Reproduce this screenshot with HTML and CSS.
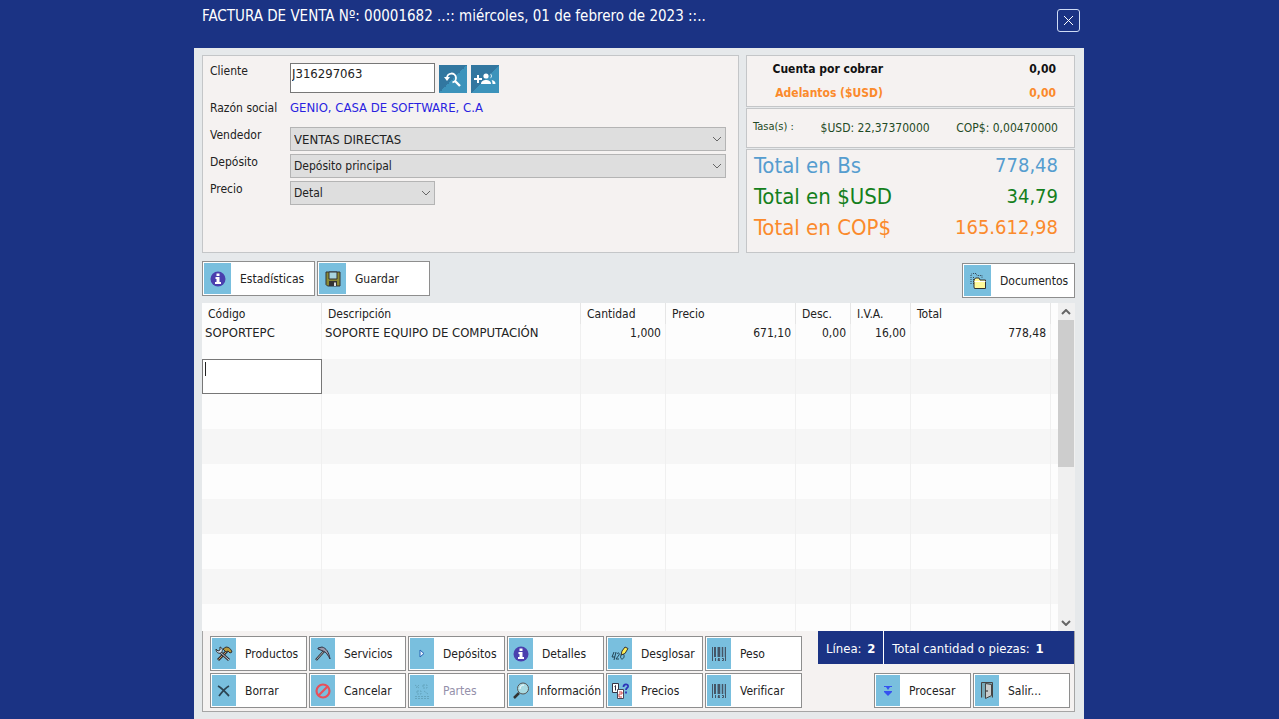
FILE: index.html
```html
<!DOCTYPE html>
<html lang="es">
<head>
    <meta charset="UTF-8">
    <meta name="viewport" content="width=device-width, initial-scale=1.0">
    <title>Factura de venta</title>
    <link rel="stylesheet" href="styles.css">
</head>
<body>
    <div class="window">
        <header class="titlebar">
            <h1>FACTURA DE VENTA Nº: 00001682 ..:: miércoles, 01 de febrero de 2023 ::..</h1>
            <button class="close" type="button" aria-label="Cerrar">
                <svg width="11" height="11" viewBox="0 0 11 11"><path d="M1 1l9 9M10 1l-9 9" stroke="#fff" fill="none"/></svg>
            </button>
        </header>

        <main class="content">
            <div class="panels">
                <form class="panel form">
                    <label for="cliente">Cliente</label>
                    <div class="client">
                        <input id="cliente" type="text" value="J316297063">
                        <button class="square" type="button" aria-label="Buscar cliente">
                            <svg width="18" height="18" viewBox="0 0 18 18" fill="none" stroke="#fff"><path d="M3 8a4.5 4.5 0 1 1 5.500 4.400" stroke-width="1.800"/><path d="M11 11l5 5" stroke-width="2.400"/><path d="M0 7h6l-3 4z" fill="#fff" stroke="none"/></svg>
                        </button>
                        <button class="square" type="button" aria-label="Agregar cliente">
                            <svg width="22" height="16" viewBox="0 0 22 16" fill="#fff"><path d="M0 7h3V4h2v3h3v2H5v3H3V9H0z"/><circle cx="12" cy="5" r="2.600"/><path d="M7 13c0-3 2.500-4 5-4s5 1 5 4z"/><path d="M16 2.500a2.600 2.600 0 0 1 0 5 4 4 0 0 0 0-5zM17.500 9c2.500.3 4 1.500 4 4h-3c0-1.800-.3-3-1-4z"/></svg>
                        </button>
                    </div>
                    <span>Razón social</span>
                    <output class="company">GENIO, CASA DE SOFTWARE, C.A</output>
                    <label for="vendedor">Vendedor</label>
                    <div class="select">
                        <select id="vendedor"><option>VENTAS DIRECTAS</option></select>
                        <svg width="10" height="6" viewBox="0 0 10 6"><path d="M1 1l4 4 4-4"/></svg>
                    </div>
                    <label for="deposito">Depósito</label>
                    <div class="select">
                        <select id="deposito"><option>Depósito principal</option></select>
                        <svg width="10" height="6" viewBox="0 0 10 6"><path d="M1 1l4 4 4-4"/></svg>
                    </div>
                    <label for="precio">Precio</label>
                    <div class="select short">
                        <select id="precio"><option>Detal</option></select>
                        <svg width="10" height="6" viewBox="0 0 10 6"><path d="M1 1l4 4 4-4"/></svg>
                    </div>
                </form>

                <section class="summary">
                    <div class="panel balance">
                        <p><span>Cuenta por cobrar</span><span>0,00</span></p>
                        <p class="orange"><span>Adelantos ($USD)</span><span>0,00</span></p>
                    </div>
                    <div class="panel rates">
                        <small>Tasa(s) :</small>
                        <span>$USD: 22,37370000</span>
                        <span>COP$: 0,00470000</span>
                    </div>
                    <div class="panel totals">
                        <p class="blue"><span>Total en Bs</span><span class="amount">778,48</span></p>
                        <p class="green"><span>Total en $USD</span><span class="amount">34,79</span></p>
                        <p class="orange"><span>Total en COP$</span><span class="amount">165.612,98</span></p>
                    </div>
                </section>
            </div>

            <div class="toolbar">
                <button class="btn wide" type="button">
                    <span class="icon"><svg width="16" height="16" viewBox="0 0 16 16"><circle cx="8" cy="8" r="7.500" fill="#4a3fae"/><path d="M6.500 2.500h3v2.500h-3zM5.500 6h4v5h1.500v2h-6v-2h1.500V8h-1z" fill="#fff"/></svg></span>
                    Estadísticas
                </button>
                <button class="btn wide" type="button">
                    <span class="icon"><svg width="16" height="16" viewBox="0 0 16 16"><path d="M1 1h14v14H2.500L1 13.500z" fill="#8a8a35" stroke="#333"/><path d="M4 1h8v7H4z" fill="#a8d4dd" stroke="#333"/><path d="M4 10h8v5H4z" fill="#333"/><path d="M9 11.500h2V15H9z" fill="#ddd"/></svg></span>
                    Guardar
                </button>
                <button class="btn wide last" type="button">
                    <span class="icon"><svg width="18" height="18" viewBox="0 0 18 18"><path d="M2 12V2.500l1-1h4l1 2h5V6M4.500 12V4.500" fill="none" stroke="#345" stroke-dasharray="1 1"/><path d="M5 15V8l1.500-2H10l1 2h5.500v8.500h-11z" fill="#fffa9a" stroke="#333"/><path d="M5.500 9.500h11" stroke="#fff"/></svg></span>
                    Documentos
                </button>
            </div>

            <div class="grid">
                <div class="rows">
                    <table>
                        <colgroup><col class="c-code"><col><col class="c-qty"><col class="c-price"><col class="c-desc"><col class="c-iva"><col class="c-total"><col class="c-end"></colgroup>
                        <thead>
                            <tr><th>Código</th><th>Descripción</th><th>Cantidad</th><th>Precio</th><th>Desc.</th><th>I.V.A.</th><th>Total</th><th></th></tr>
                        </thead>
                        <tbody>
                            <tr><td class="name">SOPORTEPC</td><td class="name">SOPORTE EQUIPO DE COMPUTACIÓN</td><td class="num">1,000</td><td class="num">671,10</td><td class="num">0,00</td><td class="num">16,00</td><td class="num">778,48</td><td></td></tr>
                            <tr><td class="edit"><input type="text" aria-label="Código"></td><td></td><td></td><td></td><td></td><td></td><td></td><td></td></tr>
                            <tr><td></td><td></td><td></td><td></td><td></td><td></td><td></td><td></td></tr>
                            <tr><td></td><td></td><td></td><td></td><td></td><td></td><td></td><td></td></tr>
                            <tr><td></td><td></td><td></td><td></td><td></td><td></td><td></td><td></td></tr>
                            <tr><td></td><td></td><td></td><td></td><td></td><td></td><td></td><td></td></tr>
                            <tr><td></td><td></td><td></td><td></td><td></td><td></td><td></td><td></td></tr>
                            <tr><td></td><td></td><td></td><td></td><td></td><td></td><td></td><td></td></tr>
                            <tr><td></td><td></td><td></td><td></td><td></td><td></td><td></td><td></td></tr>
                        </tbody>
                    </table>
                </div>
                <div class="scrollbar">
                    <button type="button" aria-label="Subir"><svg width="10" height="6" viewBox="0 0 10 6"><path d="M1 5l4-4 4 4"/></svg></button>
                    <div class="track"><div class="thumb"></div></div>
                    <button type="button" aria-label="Bajar"><svg width="10" height="6" viewBox="0 0 10 6"><path d="M1 1l4 4 4-4"/></svg></button>
                </div>
            </div>

            <footer class="footer">
                <div class="actions">
                    <button class="btn" type="button">
                        <span class="icon"><svg width="18" height="16" viewBox="0 0 18 16"><path d="M3 14L13 4" stroke="#333" stroke-width="3"/><path d="M3.500 13.500L13 4" stroke="#c96" stroke-width="1"/><path d="M8 3l3-2c3 0 5 2 6 5l-2 1-2-2-2 1z" fill="#b89a3c" stroke="#333"/><path d="M5 6l9 8" stroke="#333" stroke-width="3"/><path d="M5 6l9 8" stroke="#ccd" stroke-width="1"/><path d="M1 3l2 2 2-1V1c3 1 3 4 1 6-3 1-5-1-5-4z" fill="#cde" stroke="#333"/></svg></span>
                        Productos
                    </button>
                    <button class="btn" type="button">
                        <span class="icon"><svg width="18" height="16" viewBox="0 0 18 16"><path d="M2 14L11 4" stroke="#333" stroke-width="2.500"/><path d="M2.500 13.500L10 5" stroke="#aab"/><path d="M4 2l4-1c4 1 7 5 8 12-2-4-4-7-7-8L4 3z" fill="#99a" stroke="#334"/></svg></span>
                        Servicios
                    </button>
                    <button class="btn" type="button">
                        <span class="icon"><svg width="6" height="9" viewBox="0 0 6 9"><path d="M1 1l4 3.500L1 8z" fill="#e8f2ff" stroke="#2864b4"/></svg></span>
                        Depósitos
                    </button>
                    <button class="btn" type="button">
                        <span class="icon"><svg width="16" height="16" viewBox="0 0 16 16"><circle cx="8" cy="8" r="7.500" fill="#4a3fae"/><path d="M6.500 2.500h3v2.500h-3zM5.500 6h4v5h1.500v2h-6v-2h1.500V8h-1z" fill="#fff"/></svg></span>
                        Detalles
                    </button>
                    <button class="btn" type="button">
                        <span class="icon"><svg width="18" height="16" viewBox="0 0 18 16"><path d="M3 6l-2 5h3M5 6l-2 8M6 8c1-2 3-1 2 1l-3 4h3M12 8c-3 0-3 5-1 5s3-4 1-5z" fill="none" stroke="#245"/><path d="M10 9l1-4 3-4 3 1.500-3 5z" fill="#ffee55" stroke="#333"/></svg></span>
                        Desglosar
                    </button>
                    <button class="btn" type="button">
                        <span class="icon"><svg width="16" height="14" viewBox="0 0 16 14" stroke="#456" fill="none"><path d="M1.500 0v14M14.500 0v14M11.500 0v10"/><path d="M4 0v10M8 0v10" stroke-width="2"/><path d="M6.500 0v10M10 0v10M13 0v10" stroke-width=".5"/><path d="M4.500 11v3M7 11.500h1.500v1H7v1h2M11 11.500h1.500v2H11"/></svg></span>
                        Peso
                    </button>
                    <button class="btn" type="button">
                        <span class="icon"><svg width="14" height="12" viewBox="0 0 14 12"><path d="M1 1c4 2 7 6 11 10M12 1C8 3 5 7 2 11" fill="none" stroke="#2c4452" stroke-width="1.800"/></svg></span>
                        Borrar
                    </button>
                    <button class="btn" type="button">
                        <span class="icon"><svg width="16" height="16" viewBox="0 0 16 16"><path d="M3 13L13 3" stroke="#e8505b" stroke-width="2.200"/><circle cx="8" cy="8" r="6.500" fill="none" stroke="#e8505b" stroke-width="2.200"/></svg></span>
                        Cancelar
                    </button>
                    <button class="btn" type="button" disabled>
                        <span class="icon"><svg width="16" height="16" viewBox="0 0 16 16" fill="none" stroke="#65a5be"><path d="M1 2l4 3M5 2L2 5M9 2h4v3H9zM3 8h4v3H3zM10 8l4 3M1 13.500h14M1 15.500h14" stroke-dasharray="2 1"/></svg></span>
                        Partes
                    </button>
                    <button class="btn tight" type="button">
                        <span class="icon"><svg width="17" height="17" viewBox="0 0 17 17"><path d="M1 16l5-5" stroke="#333" stroke-width="2.500"/><circle cx="10" cy="6.500" r="5.500" fill="#a9dbe3" stroke="#555"/><path d="M7 7c0-3 2-4 4-4" stroke="#fff" fill="none"/></svg></span>
                        Información
                    </button>
                    <button class="btn" type="button">
                        <span class="icon"><svg width="17" height="16" viewBox="0 0 17 16"><path d="M.5.5h6v9h-6z" fill="#fff" stroke="#334"/><path d="M2.500 3.500l1-1v5" fill="none" stroke="#334"/><path d="M5.500 6.500h6v9h-6z" fill="#fff" stroke="#445"/><path d="M7 9h3v2H7v3h3" fill="none" stroke="#c44"/><path d="M11.500 4c0-3.500 5-3.500 4.500-.5-.3 1.500-2 1.500-2 3.500M14 8.500v2" fill="none" stroke="#2d35b8" stroke-width="1.800"/></svg></span>
                        Precios
                    </button>
                    <button class="btn" type="button">
                        <span class="icon"><svg width="16" height="14" viewBox="0 0 16 14" stroke="#456" fill="none"><path d="M1.500 0v14M14.500 0v14M11.500 0v10"/><path d="M4 0v10M8 0v10" stroke-width="2"/><path d="M6.500 0v10M10 0v10M13 0v10" stroke-width=".5"/><path d="M4.500 11v3M7 11.500h1.500v1H7v1h2M11 11.500h1.500v2H11"/></svg></span>
                        Verificar
                    </button>
                </div>
                <div class="finish">
                    <div class="status">
                        <span>Línea: <b>2</b></span>
                        <span>Total cantidad o piezas: <b>1</b></span>
                    </div>
                    <div class="end">
                        <button class="btn" type="button">
                            <span class="icon"><svg width="8" height="10" viewBox="0 0 8 10" fill="#3552f0"><path d="M0 0h8v1H6L4 4 2 1H0zM0 5h8v1L4 10 0 6z"/></svg></span>
                            Procesar
                        </button>
                        <button class="btn" type="button">
                            <span class="icon"><svg width="12" height="17" viewBox="0 0 12 17"><path d="M.5 15.500V.5h11v15" fill="#78a9b8" stroke="#444"/><path d="M4.500 1.500l6 1v11l-6 3z" fill="#c9cccc" stroke="#444"/><path d="M6 8v2" stroke="#222"/></svg></span>
                            Salir...
                        </button>
                    </div>
                </div>
            </footer>
        </main>
    </div>
</body>
</html>
```

FILE: styles.css
```css
* {
    box-sizing: border-box;
}
body {
    margin: 0;
    padding: 0 195px 0 194px;
    background-color: #1b3384;
    color: #222;
    font-family: 'DejaVu Sans Condensed', 'Noto Sans', sans-serif;
    font-size: 12px;
}
button, input, select {
    font: inherit;
    color: inherit;
    margin: 0;
}
p {
    margin: 0;
}
.window {
    display: flex;
    flex-direction: column;
    height: 100vh;
    min-height: 600px;
    min-width: 880px;
}
.titlebar {
    display: flex;
    justify-content: space-between;
    align-items: flex-start;
    height: 48px;
    padding: 6px 4px 0 8px;
    color: #fff;
}
h1 {
    margin: 0;
    font-size: 15px;
    font-weight: normal;
    line-height: 20px;
}
.close {
    display: flex;
    align-items: center;
    justify-content: center;
    width: 23px;
    height: 23px;
    margin-top: 3px;
    padding: 0;
    background: none;
    border: 1px solid #cfdcf5;
    border-radius: 3px;
}
.content {
    display: flex;
    flex-direction: column;
    flex: 1;
    min-height: 0;
    padding: 7px 9px 7px 8px;
    background-color: #e6e9eb;
}
.panels {
    display: grid;
    grid-template-columns: 1fr 329px;
    gap: 7px;
}
.panel {
    background-color: #f5f2f1;
    border: 1px solid #c4c6c8;
}

/* customer form */
.form {
    display: grid;
    grid-template-columns: 80px 1fr;
    grid-template-rows: 30px 28px 24px 24px 24px;
    gap: 3px 0;
    padding: 7px 12px 0 7px;
    line-height: 17px;
}
.form > span, .company {
    line-height: 24px;
}
.company {
    color: #2a1fe0;
}
.company, .name, #cliente, #vendedor {
    font-size: 13px;
}
.client {
    display: flex;
    align-items: flex-end;
    gap: 4px;
}
.client input {
    width: 145px;
    height: 30px;
    padding: 0 0 10px 1px;
    background-color: #fff;
    border: 1px solid #777;
}
.square {
    display: flex;
    align-items: center;
    justify-content: center;
    width: 28px;
    height: 28px;
    padding: 0;
    border: none;
    background: linear-gradient(135deg, #3277a0 50%, #3c93bb 50%);
}
.select {
    display: grid;
    align-items: center;
}
.select select, .select svg {
    grid-area: 1 / 1;
}
.select select {
    appearance: none;
    width: 100%;
    height: 24px;
    padding: 1px 20px 0 3px;
    background-color: #dedede;
    border: 1px solid #b4b4b4;
    border-radius: 0;
}
.select svg {
    justify-self: end;
    margin-right: 4px;
    pointer-events: none;
}
.select svg path, .scrollbar path {
    fill: none;
    stroke: #666;
}
.short {
    width: 145px;
}

/* balances, rates and totals */
.summary {
    display: flex;
    flex-direction: column;
    gap: 1px;
}
.balance {
    height: 52px;
    padding: 1px 18px 0 0;
    font-weight: bold;
    color: #111;
}
.balance p {
    display: flex;
    justify-content: space-between;
    line-height: 24px;
}
.balance span:first-child {
    width: 136px;
    text-align: right;
}
.rates {
    display: flex;
    justify-content: space-between;
    height: 40px;
    padding: 0 16px 0 6px;
    line-height: 38px;
    color: #1f4a25;
}
.rates small {
    font-size: 11px;
    line-height: 36px;
}
.totals {
    height: 104px;
    padding: 0 16px 0 7px;
    font-size: 22px;
}
.totals p {
    display: flex;
    justify-content: space-between;
    line-height: 31px;
}
.totals .amount {
    font-size: 20px;
}
.blue {
    color: #559dcf;
}
.green {
    color: #14801c;
}
.orange {
    color: #fb8a2c;
}

/* buttons */
.toolbar {
    display: flex;
    gap: 2px;
    height: 50px;
    padding: 8px 0 5px;
}
.btn {
    display: flex;
    align-items: center;
    gap: 9px;
    width: 97px;
    height: 35px;
    padding: 1px;
    background-color: #fff;
    border: 1px solid #8e8e8e;
    white-space: nowrap;
}
.btn .icon {
    display: flex;
    flex: none;
    align-items: center;
    justify-content: center;
    align-self: stretch;
    width: 24px;
    background-color: #79bfde;
}
.btn.wide {
    width: 113px;
}
.btn.wide .icon {
    width: 27px;
}
.btn.tight {
    gap: 4px;
}
.btn.last {
    align-self: flex-end;
    margin-left: auto;
}
.btn:disabled {
    color: #9490aa;
}

/* invoice lines */
.grid {
    display: flex;
    flex: 1;
    min-height: 0;
    background-color: #fdfdfd;
}
.rows {
    flex: 1;
    overflow: hidden;
}
table {
    width: 100%;
    table-layout: fixed;
    border-collapse: separate;
    border-spacing: 0;
}
.c-code { width: 120px; }
.c-qty { width: 85px; }
.c-price { width: 130px; }
.c-desc { width: 55px; }
.c-iva { width: 60px; }
.c-total { width: 140px; }
.c-end { width: 7px; }
th {
    height: 21px;
    padding: 0 6px;
    text-align: left;
    font-weight: normal;
    border-right: 1px solid #e6e6e6;
}
td {
    height: 35px;
    padding: 2px 4px 0 3px;
    vertical-align: top;
    line-height: 14px;
    border-right: 1px solid #f0f0f0;
    white-space: nowrap;
}
th:last-child, td:last-child {
    padding: 0;
    border-right: none;
}
tbody tr:nth-child(even) {
    background-color: #f6f6f6;
}
.num {
    text-align: right;
}
.edit {
    padding: 0;
    border-right: none;
}
/* the dark bar is the text cursor */
.edit input {
    display: block;
    width: 100%;
    height: 35px;
    padding: 0 0 15px 1px;
    background: linear-gradient(#222, #222) 2px 2px / 1px 14px no-repeat #fff;
    border: 1px solid #777;
    outline: none;
}
.edit input:focus {
    background: #fff;
}
.scrollbar {
    display: flex;
    flex-direction: column;
    width: 17px;
    padding-right: 1px;
    background-color: #f0f0f0;
}
.scrollbar button {
    height: 17px;
    padding: 0;
    line-height: 0;
    background: none;
    border: none;
}
.scrollbar path {
    stroke-width: 2;
}
.track {
    flex: 1;
}
.thumb {
    height: 50%;
    background-color: #cdcdcd;
}

/* bottom actions */
.footer {
    display: flex;
    justify-content: space-between;
    background-color: #f5f2f1;
    border: 1px solid #a5a5a5;
    border-top: none;
}
.actions {
    display: grid;
    grid-template-columns: repeat(6, 97px);
    gap: 2px;
    padding: 5px 0 3px 7px;
}
.finish {
    display: flex;
    flex-direction: column;
    justify-content: space-between;
    width: 256px;
    padding-bottom: 3px;
}
.status {
    display: flex;
    gap: 1px;
    background-color: #fff;
    color: #fff;
}
.status span {
    padding: 2px 8px 0;
    line-height: 31px;
    font-size: 13px;
    background-color: #1b3384;
}
.status span:last-child {
    flex: 1;
}
.status b {
    margin-left: 2px;
}
.end {
    display: flex;
    justify-content: flex-end;
    gap: 2px;
    padding-right: 4px;
}
```
